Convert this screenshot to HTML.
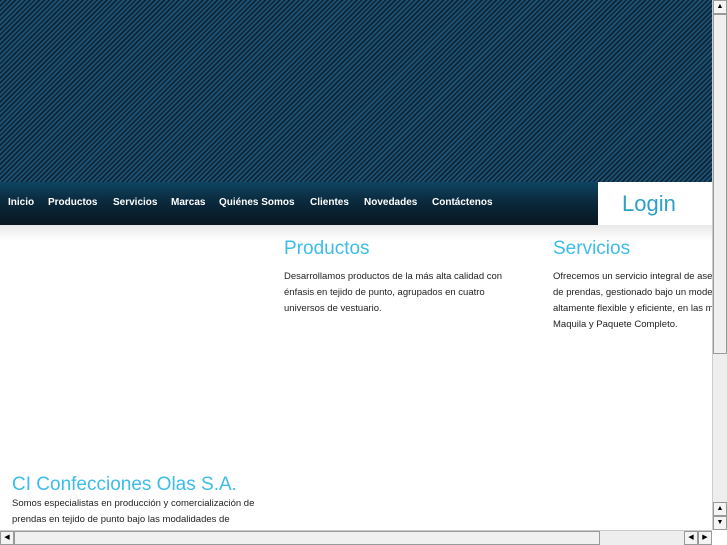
<!DOCTYPE html>
<html><head><meta charset="utf-8"><style>
body{margin:0;width:727px;height:545px;overflow:hidden;position:relative;background:#fff;font-family:"Liberation Sans",sans-serif}
#hdr{position:absolute;left:0;top:0;width:712px;height:182px;background:repeating-linear-gradient(135deg,#0d2435 0 1.6px,#1d5274 1.6px 3.4px)}
#nav{position:absolute;left:0;top:182px;width:598px;height:43px;background:linear-gradient(#0e4562,#0b2c40 40%,#07161f)}
#nav span{position:absolute;top:15px;color:#fff;font-size:10px;font-weight:bold}
#login{position:absolute;left:598px;top:182px;width:114px;height:43px;background:#fff;color:#2fa0c8;font-size:22px}
#login span{position:absolute;left:24px;top:9px}
#band{position:absolute;left:0;top:225px;width:712px;height:15px;background:linear-gradient(#e8e8e8,#fff)}
h2{position:absolute;margin:0;font-weight:normal;color:#3cbde8;font-size:19px}
p{position:absolute;margin:0;font-size:9.5px;line-height:16px;color:#222}
#vs{position:absolute;left:712px;top:0;width:15px;height:530px;background:#eee;border-left:1px solid #ccc;box-sizing:border-box}
#hs{position:absolute;left:0;top:530px;width:712px;height:15px;background:#eee;border-top:1px solid #ccc;box-sizing:border-box}
.b{position:absolute;background:#f4f4f4;border:1px solid #999;box-sizing:border-box;font-size:7px;text-align:center;line-height:12px;color:#000}
</style></head><body>
<div id="hdr"></div>
<div id="nav">
<span style="left:8px">Inicio</span><span style="left:48px">Productos</span><span style="left:113px">Servicios</span><span style="left:171px">Marcas</span><span style="left:219px">Quiénes Somos</span><span style="left:310px">Clientes</span><span style="left:364px">Novedades</span><span style="left:432px">Contáctenos</span>
</div>
<div id="login"><span>Login</span></div>
<div id="band"></div>
<h2 style="left:284px;top:238px">Productos</h2>
<p style="left:284px;top:269px;width:240px">Desarrollamos productos de la más alta calidad con énfasis en tejido de punto, agrupados en cuatro universos de vestuario.</p>
<h2 style="left:553px;top:238px">Servicios</h2>
<p style="left:553px;top:269px;white-space:nowrap;overflow:hidden;width:159px">Ofrecemos un servicio integral de asesoría<br>de prendas, gestionado bajo un modelo<br>altamente flexible y eficiente, en las modalidades<br>Maquila y Paquete Completo.</p>
<h2 style="left:12px;top:474px">CI Confecciones Olas S.A.</h2>
<p style="left:12px;top:496px;width:250px;height:34px;overflow:hidden;line-height:16px">Somos especialistas en producción y comercialización de prendas en tejido de punto bajo las modalidades de Maquila y Paquete Completo.</p>
<div id="vs"><div class="b" style="left:0;top:0;width:14px;height:14px">▲</div><div class="b" style="left:0;top:14px;width:14px;height:340px;background:#f0f0f0"></div><div class="b" style="left:0;top:502px;width:14px;height:14px">▲</div><div class="b" style="left:0;top:516px;width:14px;height:14px">▼</div></div>
<div id="hs"><div class="b" style="left:0;top:0;width:14px;height:14px">◀</div><div class="b" style="left:14px;top:0;width:586px;height:14px;background:#f0f0f0"></div><div class="b" style="left:684px;top:0;width:14px;height:14px">◀</div><div class="b" style="left:698px;top:0;width:14px;height:14px">▶</div></div>
</body></html>
